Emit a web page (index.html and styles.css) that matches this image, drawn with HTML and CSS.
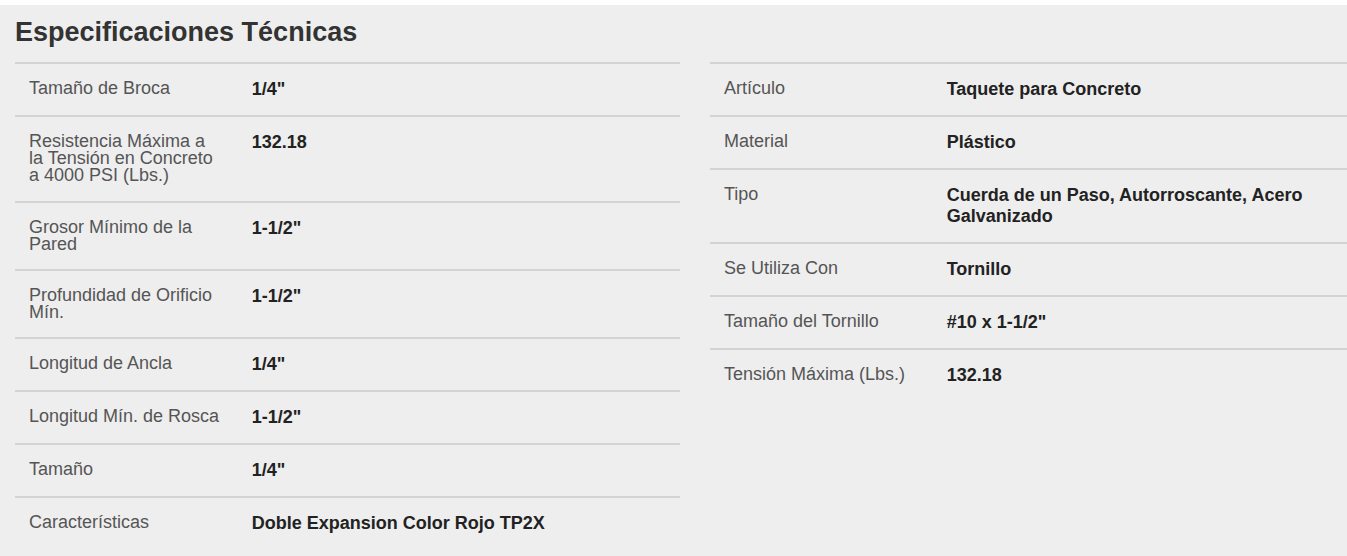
FILE: index.html
```html
<!DOCTYPE html>
<html lang="es">
<head>
<meta charset="utf-8">
<title>Especificaciones Técnicas</title>
<link rel="stylesheet" href="styles.css">
</head>
<body>
<section class="specs">
  <h2 class="specs-title">Especificaciones Técnicas</h2>
  <div class="specs-grid">
    <table class="spec-table">
      <tbody>
        <tr><th>Tamaño de Broca</th><td>1/4"</td></tr>
        <tr><th>Resistencia Máxima a la Tensión en Concreto a 4000 PSI (Lbs.)</th><td>132.18</td></tr>
        <tr><th>Grosor Mínimo de la Pared</th><td>1-1/2"</td></tr>
        <tr><th>Profundidad de Orificio Mín.</th><td>1-1/2"</td></tr>
        <tr><th>Longitud de Ancla</th><td>1/4"</td></tr>
        <tr><th>Longitud Mín. de Rosca</th><td>1-1/2"</td></tr>
        <tr><th>Tamaño</th><td>1/4"</td></tr>
        <tr><th>Características</th><td>Doble Expansion Color Rojo TP2X</td></tr>
      </tbody>
    </table>
    <table class="spec-table">
      <tbody>
        <tr><th>Artículo</th><td>Taquete para Concreto</td></tr>
        <tr><th>Material</th><td>Plástico</td></tr>
        <tr><th>Tipo</th><td>Cuerda de un Paso, Autorroscante, Acero Galvanizado</td></tr>
        <tr><th>Se Utiliza Con</th><td>Tornillo</td></tr>
        <tr><th>Tamaño del Tornillo</th><td>#10 x 1-1/2"</td></tr>
        <tr><th>Tensión Máxima (Lbs.)</th><td>132.18</td></tr>
      </tbody>
    </table>
  </div>
</section>
</body>
</html>
```

FILE: styles.css
```css
html, body {
  margin: 0;
  padding: 0;
  background: #ffffff;
  overflow: hidden;
}

body {
  font-family: "Liberation Sans", Arial, Helvetica, sans-serif;
  padding-top: 5px;
  height: 100vh;
  box-sizing: border-box;
}

.specs {
  box-sizing: border-box;
  height: 100%;
  background: #eeeeee;
  padding: 12px 0 0 15px;
  overflow: hidden;
}

.specs-title {
  margin: 0 0 15px;
  font-size: 27px;
  line-height: 30px;
  font-weight: bold;
  color: #333333;
}

.specs-grid {
  display: grid;
  grid-template-columns: 665px 665px;
  column-gap: 30px;
  align-items: start;
}

.spec-table {
  width: 665px;
  border-collapse: collapse;
  table-layout: fixed;
}

.spec-table tr {
  border-top: 2px solid #d3d3d3;
}

.spec-table th {
  box-sizing: border-box;
  width: 33.333%;
  text-align: left;
  vertical-align: top;
  font-weight: normal;
  font-size: 18px;
  line-height: 17.2px;
  color: #555555;
  padding: 16px 14px 16px 14px;
}

.spec-table td {
  vertical-align: top;
  font-weight: bold;
  font-size: 18px;
  line-height: 21px;
  color: #222222;
  padding: 15px 14px 15px 15px;
}
```
